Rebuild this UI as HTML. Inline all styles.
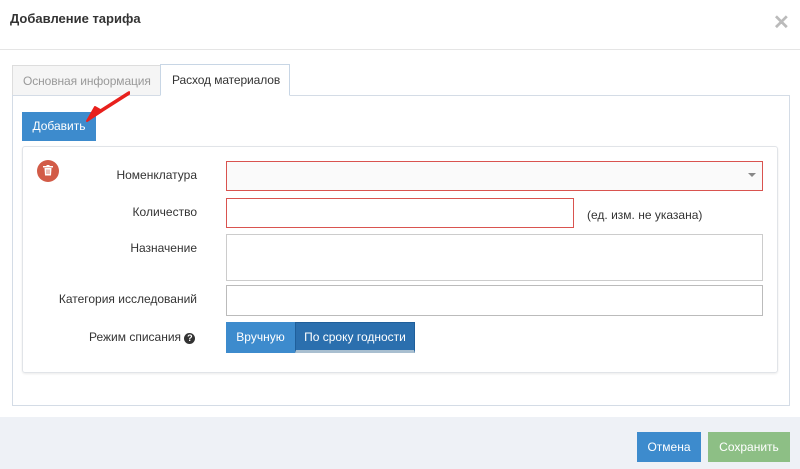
<!DOCTYPE html>
<html><head><meta charset="utf-8"><style>
*{box-sizing:border-box;margin:0;padding:0}
body{width:800px;height:469px;background:#fff;font-family:"Liberation Sans",sans-serif;font-size:12px;color:#333;position:relative;overflow:hidden}
.a{position:absolute}
.lbl{position:absolute;right:603px;text-align:right;font-size:12px;color:#333}
.inp{position:absolute;border:1px solid #ccc;background:#fff}
.red{border-color:#d9534f}
.btn{position:absolute;color:#fff;font-size:12px;text-align:center}
</style></head><body>
<div class="a" style="left:10px;top:11px;font-size:13px;font-weight:bold;color:#333">Добавление тарифа</div>
<div class="a" style="left:773px;top:10px;font-size:20px;font-weight:bold;color:#bbb">✕</div>
<div class="a" style="left:0;top:49px;width:800px;height:1px;background:#e5e5e5"></div>
<div class="a" style="left:12px;top:65px;width:149px;height:31px;border:1px solid #ddd;border-bottom:none;background:#f5f5f5;color:#999;padding:8px 0 0 10px;letter-spacing:-0.1px">Основная информация</div>
<div class="a" style="left:160px;top:64px;width:130px;height:32px;border:1px solid #c8d6e5;border-bottom:1px solid #fff;background:#fff;color:#333;padding:8px 0 0 11px;z-index:2;letter-spacing:-0.1px">Расход материалов</div>
<div class="a" style="left:12px;top:95px;width:778px;height:311px;border:1px solid #d4dce6"></div>
<div class="btn" style="left:22px;top:112px;width:74px;height:29px;background:#3d8bcd;line-height:29px">Добавить</div>
<svg class="a" style="left:80px;top:88px" width="50" height="40"><path d="M49 5 L16 26" stroke="#e8201c" stroke-width="3.5" stroke-linecap="round"/><path d="M7 33 L22 23 L15 19 Z" fill="#e8201c" stroke="#e8201c" stroke-width="2" stroke-linejoin="round"/></svg>
<div class="a" style="left:22px;top:146px;width:756px;height:227px;border:1px solid #e1e4e8;border-radius:3px;box-shadow:0 1px 2px rgba(0,0,0,.08)"></div>
<div class="a" style="left:37px;top:160px;width:22px;height:22px;border-radius:50%;background:#d25b47"></div>
<svg class="a" style="left:43px;top:165px" width="10" height="11"><rect x="0" y="1" width="10" height="1.5" fill="#fff"/><rect x="3.5" y="0" width="3" height="1.5" fill="#fff"/><path d="M1.5 3 H8.5 L8 10.5 H2 Z" fill="#fff"/><path d="M4 4.5 V9 M6 4.5 V9" stroke="#d25b47" stroke-width="0.8"/></svg>
<div class="lbl" style="top:168px">Номенклатура</div>
<div class="inp red" style="left:226px;top:161px;width:537px;height:30px;background:#fafafa"></div>
<div class="a" style="left:748px;top:173px;width:0;height:0;border-left:4px solid transparent;border-right:4px solid transparent;border-top:4px solid #888"></div>
<div class="lbl" style="top:205px">Количество</div>
<div class="inp red" style="left:226px;top:198px;width:348px;height:30px"></div>
<div class="a" style="left:587px;top:208px;color:#333">(ед. изм. не указана)</div>
<div class="lbl" style="top:241px">Назначение</div>
<div class="inp" style="left:226px;top:234px;width:537px;height:47px"></div>
<div class="lbl" style="top:292px">Категория исследований</div>
<div class="inp" style="left:226px;top:285px;width:537px;height:31px;border-color:#bbb"></div>
<div class="a" style="left:89px;top:330px">Режим списания <span style="display:inline-block;width:11px;height:11px;border-radius:50%;background:#333;color:#fff;font-size:9px;text-align:center;line-height:11px;font-weight:bold">?</span></div>
<div class="btn" style="left:226px;top:322px;width:69px;height:31px;background:#3d8bcd;line-height:31px">Вручную</div>
<div class="btn" style="left:295px;top:322px;width:120px;height:31px;background:#2b6fae;border:1px solid #1f5f9b;line-height:29px;border-bottom:3px solid #a9bfd0">По сроку годности</div>
<div class="a" style="left:0;top:417px;width:800px;height:52px;background:#eef1f6"></div>
<div class="btn" style="left:637px;top:432px;width:64px;height:30px;background:#3d8bcd;line-height:30px">Отмена</div>
<div class="btn" style="left:708px;top:432px;width:82px;height:30px;background:#8dbf85;line-height:30px">Сохранить</div>
</body></html>
